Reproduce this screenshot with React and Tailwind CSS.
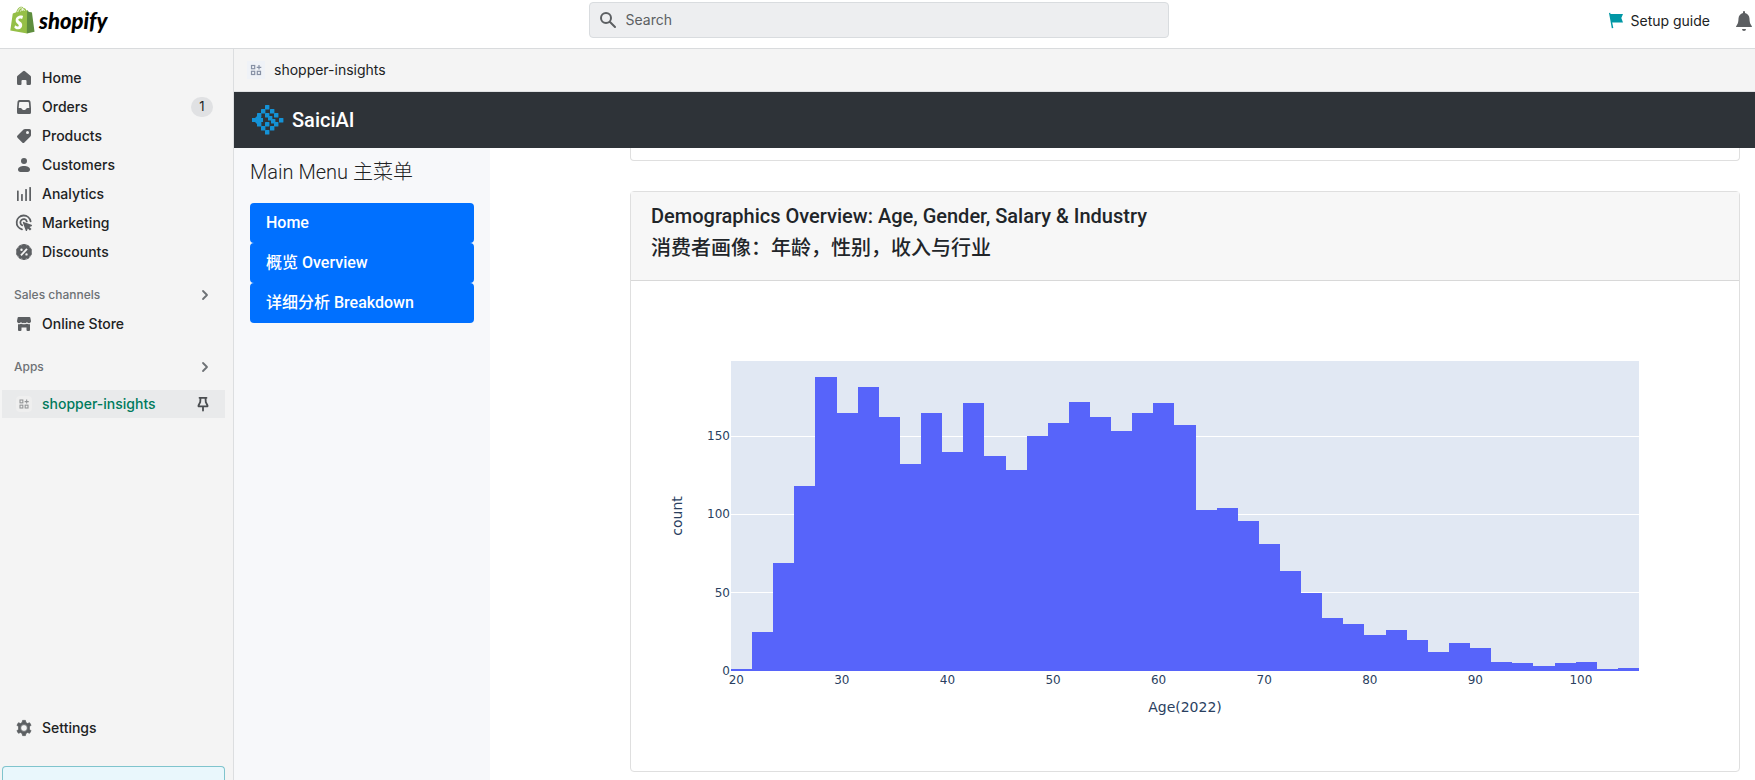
const UI_FONT = "font-['Inter','Noto_Sans_CJK_SC',sans-serif]";
const APP_FONT = "font-['Roboto','Noto_Sans_CJK_SC',sans-serif]";

const icon = "h-5 w-5 shrink-0 fill-[#5c5f62]";

const HomeIcon = () => (
  <svg viewBox="0 0 20 20" className={icon} aria-hidden="true">
    <path d="M9 3.300a1.500 1.500 0 0 1 2 0l5.400 4.500c.4.300.6.800.6 1.300v6.400a1.500 1.500 0 0 1-1.500 1.500h-2a1 1 0 0 1-1-1V13a1 1 0 0 0-1-1h-3a1 1 0 0 0-1 1v3a1 1 0 0 1-1 1h-2A1.500 1.500 0 0 1 3 15.500V9.100c0-.5.2-1 .6-1.300z" />
  </svg>
);
const OrdersIcon = () => (
  <svg viewBox="0 0 20 20" className={icon} aria-hidden="true">
    <path fillRule="evenodd" d="M5.500 3h9a2 2 0 0 1 2 1.700L17 11v4.500a1.500 1.500 0 0 1-1.500 1.500h-11A1.500 1.500 0 0 1 3 15.500V11l.5-6.300A2 2 0 0 1 5.500 3zM6 5a.9.9 0 0 0-.9.800L4.700 11h1.800c.6 0 1 .3 1.300.8.4.8 1.200 1.200 2.200 1.200s1.800-.4 2.200-1.200c.3-.5.7-.8 1.300-.8h1.800l-.4-5.200A.9.9 0 0 0 14 5z" />
  </svg>
);
const ProductsIcon = () => (
  <svg viewBox="0 0 20 20" className={icon} aria-hidden="true">
    <path fillRule="evenodd" d="M11 3h4.500A1.500 1.500 0 0 1 17 4.500V9c0 .5-.2 1-.6 1.400l-6 6a1.600 1.600 0 0 1-2.200 0l-4.700-4.700a1.600 1.600 0 0 1 0-2.200l6-5.900c.4-.4.9-.6 1.500-.6zm2.500 5a1.500 1.500 0 1 0 0-3 1.500 1.500 0 0 0 0 3z" />
  </svg>
);
const CustomersIcon = () => (
  <svg viewBox="0 0 20 20" className={icon} aria-hidden="true">
    <circle cx="10" cy="6" r="3" />
    <path d="M4 14.500C4 12.300 6.700 11 10 11s6 1.300 6 3.500c0 1.500-.9 2.500-2.500 2.500h-7C4.900 17 4 16 4 14.500z" />
  </svg>
);
const AnalyticsIcon = () => (
  <svg viewBox="0 0 20 20" className={icon} aria-hidden="true">
    <rect x="3" y="6.500" width="1.700" height="10.500" rx=".5" />
    <rect x="7.100" y="10" width="1.700" height="7" rx=".5" />
    <rect x="11.200" y="5" width="1.700" height="12" rx=".5" />
    <rect x="15.300" y="3" width="1.700" height="14" rx=".5" />
  </svg>
);
const MarketingIcon = () => (
  <svg viewBox="0 0 20 20" className={icon} aria-hidden="true">
    <path fill="none" stroke="#5c5f62" strokeWidth="1.800" strokeLinecap="round" d="M16.600 8.400A7 7 0 1 0 8 16.300M12.800 8.400A3.300 3.300 0 1 0 8.100 12.300" />
    <path d="M9.700 8.900l7.800 2.900c.7.300.6 1.200 0 1.400l-2 .7 2 2.100-1.600 1.600-2.100-2.100-.7 2c-.2.700-1.200.7-1.400 0L8.900 9.800c-.2-.6.300-1.100.8-.9z" />
  </svg>
);
const DiscountsIcon = () => (
  <svg viewBox="0 0 20 20" className={icon} aria-hidden="true">
    <path fillRule="evenodd" d="M8.600 2.600a2 2 0 0 1 2.800 0l.7.700 1-.1a2 2 0 0 1 2.300 1.600l.2 1 .9.500a2 2 0 0 1 .8 2.700l-.4.900.4.900a2 2 0 0 1-.8 2.700l-.9.500-.2 1a2 2 0 0 1-2.300 1.700l-1-.2-.7.700a2 2 0 0 1-2.800 0l-.7-.7-1 .2A2 2 0 0 1 4.600 15l-.2-1-.9-.5a2 2 0 0 1-.8-2.700l.4-.9-.4-.9a2 2 0 0 1 .8-2.700l.9-.5.2-1a2 2 0 0 1 2.300-1.600l1 .1zM12.300 6.300l-6 6.400 1.300 1.200 6.100-6.400zM7.500 8.900a1.200 1.200 0 1 0 0-2.400 1.200 1.200 0 0 0 0 2.400zm5 4.700a1.200 1.200 0 1 0 0-2.400 1.200 1.200 0 0 0 0 2.400z" />
    <circle cx="10" cy="10" r="7.600" fill="none" stroke="#5c5f62" strokeWidth=".7" />
  </svg>
);
const StoreIcon = () => (
  <svg viewBox="0 0 20 20" className={icon} aria-hidden="true">
    <path d="M4.500 3h11c.4 0 .7.200.8.600L17 7c0 1.300-.9 2.200-2 2.200-1 0-1.600-.5-2.100-1.100-.3.600-1 1.100-1.900 1.100-.4 0-.8-.1-1-.4-.300.300-.7.400-1.100.4-.9 0-1.500-.5-1.900-1.100-.4.600-1.100 1.100-2 1.100C3.900 9.200 3 8.300 3 7l.7-3.400c.1-.4.400-.6.800-.6z" />
    <path d="M4 10.300h1.500c.7 0 1.100-.2 1.600-.5.500.3 1.100.5 1.800.5h2.200c.7 0 1.300-.2 1.800-.5.500.3 1 .5 1.700.5H16v5.700a1 1 0 0 1-1 1h-1.500a1 1 0 0 1-1-1v-2.500h-5V16a1 1 0 0 1-1 1H5a1 1 0 0 1-1-1z" />
  </svg>
);
const SettingsIcon = () => (
  <svg viewBox="0 0 20 20" className={icon} aria-hidden="true">
    <path
      fillRule="evenodd"
      stroke="#5c5f62"
      strokeWidth=".8"
      strokeLinejoin="round"
      d="M8.600 2.400h2.800l.5 2.200 1.500.9 2.200-.7 1.400 2.400-1.600 1.600v2.400l1.600 1.600-1.400 2.400-2.200-.7-1.500.9-.5 2.200H8.600l-.5-2.200-1.500-.9-2.200.7L3 12.800l1.600-1.600V8.800L3 7.200l1.400-2.400 2.200.7 1.500-.9zM10 13.400a3.400 3.400 0 1 0 0-6.800 3.400 3.400 0 0 0 0 6.800z"
    />
  </svg>
);
const AppGlyph = ({ className }) => (
  <svg viewBox="0 0 18 18" className={className} aria-hidden="true">
    <g fill="none" stroke="currentColor" strokeWidth="1.200">
      <rect x="4.500" y="4.500" width="3.200" height="3.200" />
      <rect x="4.500" y="10.300" width="3.200" height="3.200" />
      <rect x="10.300" y="10.300" width="3.200" height="3.200" />
      <path d="M12 4v4.500M9.700 6.300h4.600" />
    </g>
  </svg>
);
const PinIcon = () => (
  <svg viewBox="0 0 20 20" className={icon} aria-hidden="true">
    <path fill="none" stroke="#4a4d50" strokeWidth="1.800" strokeLinejoin="round" strokeLinecap="round" d="M6.500 3.800h7M7.500 4l-.3 4.200-1.700 3.300v.8h9v-.8l-1.700-3.300-.3-4.200M10 12.500v4" />
  </svg>
);
const Chevron = () => (
  <svg viewBox="0 0 20 20" className="h-5 w-5" aria-hidden="true">
    <path fill="none" stroke="#6d7175" strokeWidth="1.800" strokeLinecap="round" strokeLinejoin="round" d="M8 6l4 4-4 4" />
  </svg>
);
const ShopifyBag = () => (
  <svg viewBox="0 0 26 29" className="h-7 w-[25px] shrink-0" aria-hidden="true">
    <path fill="#95bf47" d="M2.800 8.300c.1-.6.300-.8.800-.9L6.500 6.500C7.200 3.300 9.200.6 11.700.6c1 0 1.800.5 2.300 1.400 1.700-.1 2.600 1.300 3 2.500l1.300-.4L18 28.600.3 25.300z" />
    <path fill="#5e8e3e" d="M17.800 4.300l2 2 2.500.200c.3 0 .5.2.6.600l2.600 19.700-8 1.800z" />
    <path fill="none" stroke="#fff" strokeWidth=".9" d="M8 6.300c.6-2.300 2-4.300 3.700-4.500 1.300-.1 1.700 1.700 1.600 3.300M11 5.600c.5-1.500 1.400-2.500 2.600-2.400.9 0 1.300.9 1.500 1.700" />
    <path fill="#fff" d="M13.600 10.300l-1 3.200s-1-.5-2.100-.5c-1.700 0-1.800 1-1.800 1.300 0 1.500 4 2 4 5.500 0 2.700-1.700 4.400-4 4.400-2.800 0-4.200-1.700-4.200-1.700l.8-2.500s1.400 1.200 2.700 1.200c.8 0 1.100-.6 1.100-1.100 0-1.900-3.200-2-3.200-5.200 0-2.700 1.900-5.200 5.700-5.200 1.400 0 2 .6 2 .6z" />
  </svg>
);

const navItems = [
  { label: "Home", Icon: HomeIcon },
  { label: "Orders", Icon: OrdersIcon, badge: "1" },
  { label: "Products", Icon: ProductsIcon },
  { label: "Customers", Icon: CustomersIcon },
  { label: "Analytics", Icon: AnalyticsIcon },
  { label: "Marketing", Icon: MarketingIcon },
  { label: "Discounts", Icon: DiscountsIcon },
];

function NavLink({ label, Icon, badge }) {
  return (
    <a href="#" className="flex h-[29px] items-center gap-2 pr-5 pl-3.5 text-sm font-medium text-[#202223]">
      <Icon />
      <span className="flex-1">{label}</span>
      {badge && <span className="flex h-5 w-[22px] items-center justify-center rounded-full bg-[#e0e1e3] text-[13px] font-normal">{badge}</span>}
    </a>
  );
}

function SectionButton({ label }) {
  return (
    <button type="button" className="mt-[15px] flex h-7 w-full items-center justify-between pr-[18px] pl-3.5 text-xs font-medium text-[#6d7175]">
      {label}
      <Chevron />
    </button>
  );
}

const counts = [
  1, 25, 69, 118, 188, 165, 181, 162, 132, 165, 140, 171, 137, 128, 150, 158, 172, 162, 153, 165, 171, 157, 103, 104,
  96, 81, 64, 50, 34, 30, 23, 26, 20, 12, 18, 15, 6, 5, 3, 5, 6, 1, 2,
];
const PLOT = { left: 80, top: 60, width: 908, height: 310 };
const baseY = PLOT.top + PLOT.height;
const xAt = (age) => PLOT.left + ((age - 19.5) * PLOT.width) / 86;
const yAt = (count) => baseY - (count * PLOT.height) / (188 / 0.95);

function AgeHistogram() {
  return (
    <svg viewBox="0 0 1068 450" className="block w-full fill-[#2a3f5f] font-['DejaVu_Sans',sans-serif]" role="img" aria-label="Age histogram">
      <rect x={PLOT.left} y={PLOT.top} width={PLOT.width} height={PLOT.height} fill="#e1e8f3" />
      {[50, 100, 150].map((v) => (
        <rect key={v} x={PLOT.left} y={Math.floor(yAt(v))} width={PLOT.width} height="1" fill="#fff" />
      ))}
      {counts.map((c, i) => {
        const x0 = Math.round(xAt(19.5 + 2 * i));
        const x1 = Math.round(xAt(21.5 + 2 * i));
        const y = Math.round(yAt(c));
        return <rect key={i} x={x0} y={y} width={x1 - x0} height={baseY - y} fill="#5764fa" />;
      })}
      {[0, 50, 100, 150].map((v) => (
        <text key={v} x="79" y={Math.round(yAt(v)) + 4} textAnchor="end" fontSize="12">{v}</text>
      ))}
      {[20, 30, 40, 50, 60, 70, 80, 90, 100].map((v) => (
        <text key={v} x={xAt(v)} y="383" textAnchor="middle" fontSize="12">{v}</text>
      ))}
      <text x="534" y="411" textAnchor="middle" fontSize="14">Age(2022)</text>
      <text transform="rotate(-90 31 215)" x="31" y="215" textAnchor="middle" fontSize="14">count</text>
    </svg>
  );
}

const LOGO_CELLS = [
  [13, 0], [9, 4], [18, 4], [5, 8], [13, 8], [22, 8], [27, 13], [16, 11], [19, 14],
  [22, 17], [5, 17], [9, 21], [13, 17], [18, 21], [13, 25],
];

function SaiciLogo() {
  return (
    <svg viewBox="0 0 32 30" className="h-[30px] w-8" aria-hidden="true">
      <g fill="#1492d6">
        {LOGO_CELLS.map(([x, y]) => <rect key={x + "-" + y} x={x} y={y} width="4.400" height="4.400" rx=".5" />)}
        <path d="M0 13h3l3-3h3v3h2v4H9v3H6l-3-3H0z" />
      </g>
    </svg>
  );
}

export default function App() {
  return (
    <div className={`flex h-screen flex-col overflow-hidden bg-white text-[#202223] ${UI_FONT}`}>
      <header className="grid h-[49px] shrink-0 grid-cols-[1fr_580px_1fr] border-b border-[#d9dbdd] pl-0.5">
        <a href="#" aria-label="shopify" className="flex h-10 items-center gap-1 pl-2">
          <ShopifyBag />
          <span className="font-['Lato',sans-serif] text-[22px] font-black text-black italic">shopify</span>
        </a>
        <label className="mt-0.5 flex h-9 items-center gap-2 rounded-sm border border-[#d9dcdf] bg-[#edeef0] px-2">
          <svg viewBox="0 0 20 20" className={icon} aria-hidden="true">
            <path fill="none" stroke="#5c5f62" strokeWidth="2" strokeLinecap="round" d="M12 12l5 5M13 8A5 5 0 1 1 3 8a5 5 0 0 1 10 0z" />
          </svg>
          <input type="text" aria-label="Search" placeholder="Search" className="w-full bg-transparent text-sm outline-none placeholder:text-[#5c5f62]" />
        </label>
        <div className="flex h-[42px] items-center justify-end gap-6">
          <a href="#" className="flex items-center gap-1 text-sm">
            <svg viewBox="0 0 20 20" className="h-5 w-5 fill-[#0097a5]" aria-hidden="true">
              <path d="M3 2l1.200-.2.300 1.200H17l-1.700 4L17 11.500H6.200L7.300 17l-1.500.3z" />
            </svg>
            Setup guide
          </a>
          <button type="button" aria-label="Notifications" className="pr-px">
            <svg viewBox="0 0 20 20" className={icon} aria-hidden="true">
              <path d="M9 1a1 1 0 0 1 2 0v1.100c2.600.5 4.300 2.700 4.500 5.400.1 3 .4 5 1.600 6.500.7.900.9 2 .9 2H2s.2-1.100.9-2c1.200-1.500 1.500-3.500 1.600-6.500.2-2.700 1.900-4.900 4.500-5.400zM8 18h4a2 2 0 0 1-4 0z" />
            </svg>
          </button>
        </div>
      </header>

      <div className="flex min-h-0 flex-1">
        <aside className="flex w-[234px] shrink-0 flex-col overflow-hidden border-r border-[#dcdee0] bg-[#f4f4f4]">
          <nav className="pt-3.5">
            {navItems.map((item) => <NavLink key={item.label} {...item} />)}
            <SectionButton label="Sales channels" />
            <NavLink label="Online Store" Icon={StoreIcon} />
            <SectionButton label="Apps" />
            <div className="mt-[9px] mr-2 ml-0.5 flex h-7 items-center bg-[#e9eaeb] px-3">
              <a href="#" className="flex flex-1 items-center gap-2 text-sm font-medium text-[#007a5c]">
                <span className="flex h-5 w-5 items-center justify-center">
                  <AppGlyph className="h-4 w-4 rounded-sm bg-[#efefef] text-[#929496]" />
                </span>
                shopper-insights
              </a>
              <button type="button" aria-label="Unpin"><PinIcon /></button>
            </div>
          </nav>
          <div className="mt-auto">
            <NavLink label="Settings" Icon={SettingsIcon} />
            <div className="mt-6 mr-2 ml-0.5 h-3.5 rounded-t border border-b-0 border-[#7fc4cd] bg-[#e9f7fc]" />
          </div>
        </aside>

        <div className="flex min-w-0 flex-1 flex-col">
          <div className="flex h-[43px] shrink-0 items-center gap-2 border-b border-[#dfe1e3] bg-[#f4f4f4] px-3 text-sm">
            <span className="flex h-5 w-5 items-center justify-center">
              <AppGlyph className="h-[18px] w-[18px] bg-[#eff2f7] text-[#8791a5]" />
            </span>
            shopper-insights
          </div>
          <div className={`flex h-14 shrink-0 items-center gap-2 bg-[#2e3338] px-[18px] text-xl font-medium text-white ${APP_FONT}`}>
            <SaiciLogo />
            <span>SaiciAI</span>
          </div>
          <div className={`flex min-h-0 flex-1 ${APP_FONT}`}>
            <nav className="w-64 shrink-0 bg-[#f7f8fa] px-4 pt-3">
              <h2 className="text-xl leading-6 font-light">Main Menu 主菜单</h2>
              <div className="mt-[19px] font-medium text-white">
                {["Home", "概览 Overview", "详细分析 Breakdown"].map((t) => (
                  <a key={t} href="#" className="flex h-10 items-center rounded bg-[#0070ff] px-4">{t}</a>
                ))}
              </div>
            </nav>
            <main className="min-w-0 flex-1 overflow-hidden pr-[15px] pl-[140px]">
              <div className="h-[13px] rounded-b border border-t-0 border-[#dfdfdf]" />
              <section className="mt-[30px] rounded border border-[#dfdfdf]">
                <header className="border-b border-[#d8d8d8] bg-[#f7f7f7] px-5 pt-3 pb-5 text-xl leading-6 font-medium text-[#212529]">
                  <h2>Demographics Overview: Age, Gender, Salary &amp; Industry</h2>
                  <p className="mt-2">消费者画像：年龄，性别，收入与行业</p>
                </header>
                <div className="p-5">
                  <AgeHistogram />
                </div>
              </section>
            </main>
          </div>
        </div>
      </div>
    </div>
  );
}
